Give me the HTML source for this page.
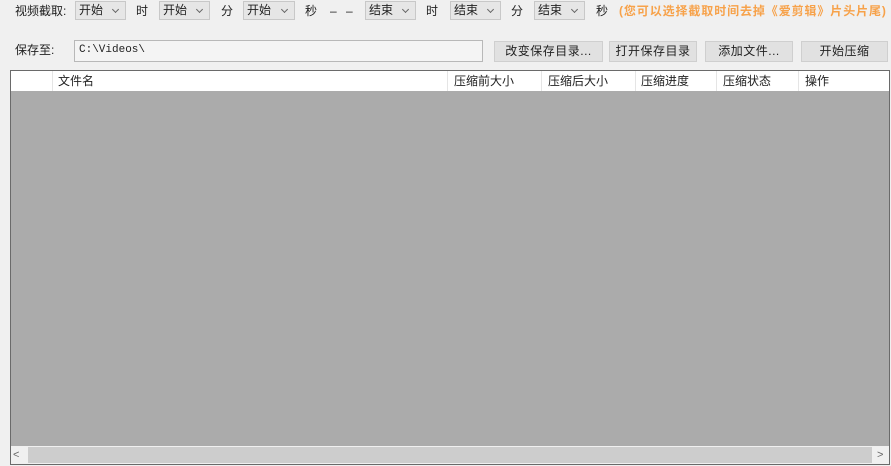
<!DOCTYPE html>
<html><head><meta charset="utf-8"><style>
*{margin:0;padding:0;box-sizing:border-box}
body{width:891px;height:466px;background:#f0f0f0;font-family:"Liberation Sans","Noto Sans CJK SC",sans-serif;font-size:12px;color:#222;position:relative;overflow:hidden}
.a{position:absolute;white-space:nowrap;line-height:14px}
.cb{position:absolute;top:1px;height:19px;border:1px solid #c8c8c8;background:#e6e6e6;padding:1px 0 0 3px;line-height:15px}
.cb:after{content:"";position:absolute;right:7px;top:5px;width:4px;height:4px;border-right:1px solid #666;border-bottom:1px solid #666;transform:rotate(45deg)}
.bt{position:absolute;top:41px;height:21px;border:1px solid #cfcfcf;background:#e1e1e1;text-align:center;line-height:19px;letter-spacing:0.5px}
.h{position:absolute;top:72px;line-height:18px}
.d{position:absolute;top:71px;width:1px;height:20px;background:#e5e5e5}
</style></head><body>
<div class="a" style="left:15px;top:4px">视频截取:</div>
<div class="cb" style="left:75px;width:51px">开始</div>
<div class="a" style="left:136px;top:4px">时</div>
<div class="cb" style="left:159px;width:51px">开始</div>
<div class="a" style="left:221px;top:4px">分</div>
<div class="cb" style="left:243px;width:52px">开始</div>
<div class="a" style="left:305px;top:4px">秒</div>
<div class="a" style="left:330px;top:4px;letter-spacing:3px">– –</div>
<div class="cb" style="left:365px;width:51px">结束</div>
<div class="a" style="left:426px;top:4px">时</div>
<div class="cb" style="left:450px;width:51px">结束</div>
<div class="a" style="left:511px;top:4px">分</div>
<div class="cb" style="left:534px;width:51px">结束</div>
<div class="a" style="left:596px;top:4px">秒</div>
<div class="a" style="left:619px;top:4px;color:#f7a24a;font-weight:bold;letter-spacing:0.9px">(您可以选择截取时间去掉《爱剪辑》片头片尾)</div>

<div class="a" style="left:15px;top:43px">保存至:</div>
<div style="position:absolute;left:74px;top:40px;width:409px;height:22px;border:1px solid #b8b8b8;background:#f4f4f4;font-family:'Liberation Mono',monospace;font-size:11px;padding:3px 4px">C:\Videos\</div>
<div class="bt" style="left:494px;width:109px">改变保存目录...</div>
<div class="bt" style="left:609px;width:88px">打开保存目录</div>
<div class="bt" style="left:705px;width:88px">添加文件...</div>
<div class="bt" style="left:801px;width:87px">开始压缩</div>

<div style="position:absolute;left:10px;top:70px;width:880px;height:395px;border:1px solid #6a6a6a;background:#ababab"></div>
<div style="position:absolute;left:11px;top:71px;width:878px;height:20px;background:#fff"></div>
<div class="d" style="left:52px"></div>
<div class="d" style="left:447px"></div>
<div class="d" style="left:541px"></div>
<div class="d" style="left:635px"></div>
<div class="d" style="left:716px"></div>
<div class="d" style="left:798px"></div>
<div class="h" style="left:58px">文件名</div>
<div class="h" style="left:454px">压缩前大小</div>
<div class="h" style="left:548px">压缩后大小</div>
<div class="h" style="left:641px">压缩进度</div>
<div class="h" style="left:723px">压缩状态</div>
<div class="h" style="left:805px">操作</div>

<div style="position:absolute;left:11px;top:446px;width:878px;height:18px;background:#f0f0f0"></div>
<div style="position:absolute;left:28px;top:447px;width:844px;height:16px;background:#cdcdcd"></div>
<div class="a" style="left:13px;top:448px;color:#666;font-size:11px">&lt;</div>
<div class="a" style="left:877px;top:448px;color:#666;font-size:11px">&gt;</div>
</body></html>
